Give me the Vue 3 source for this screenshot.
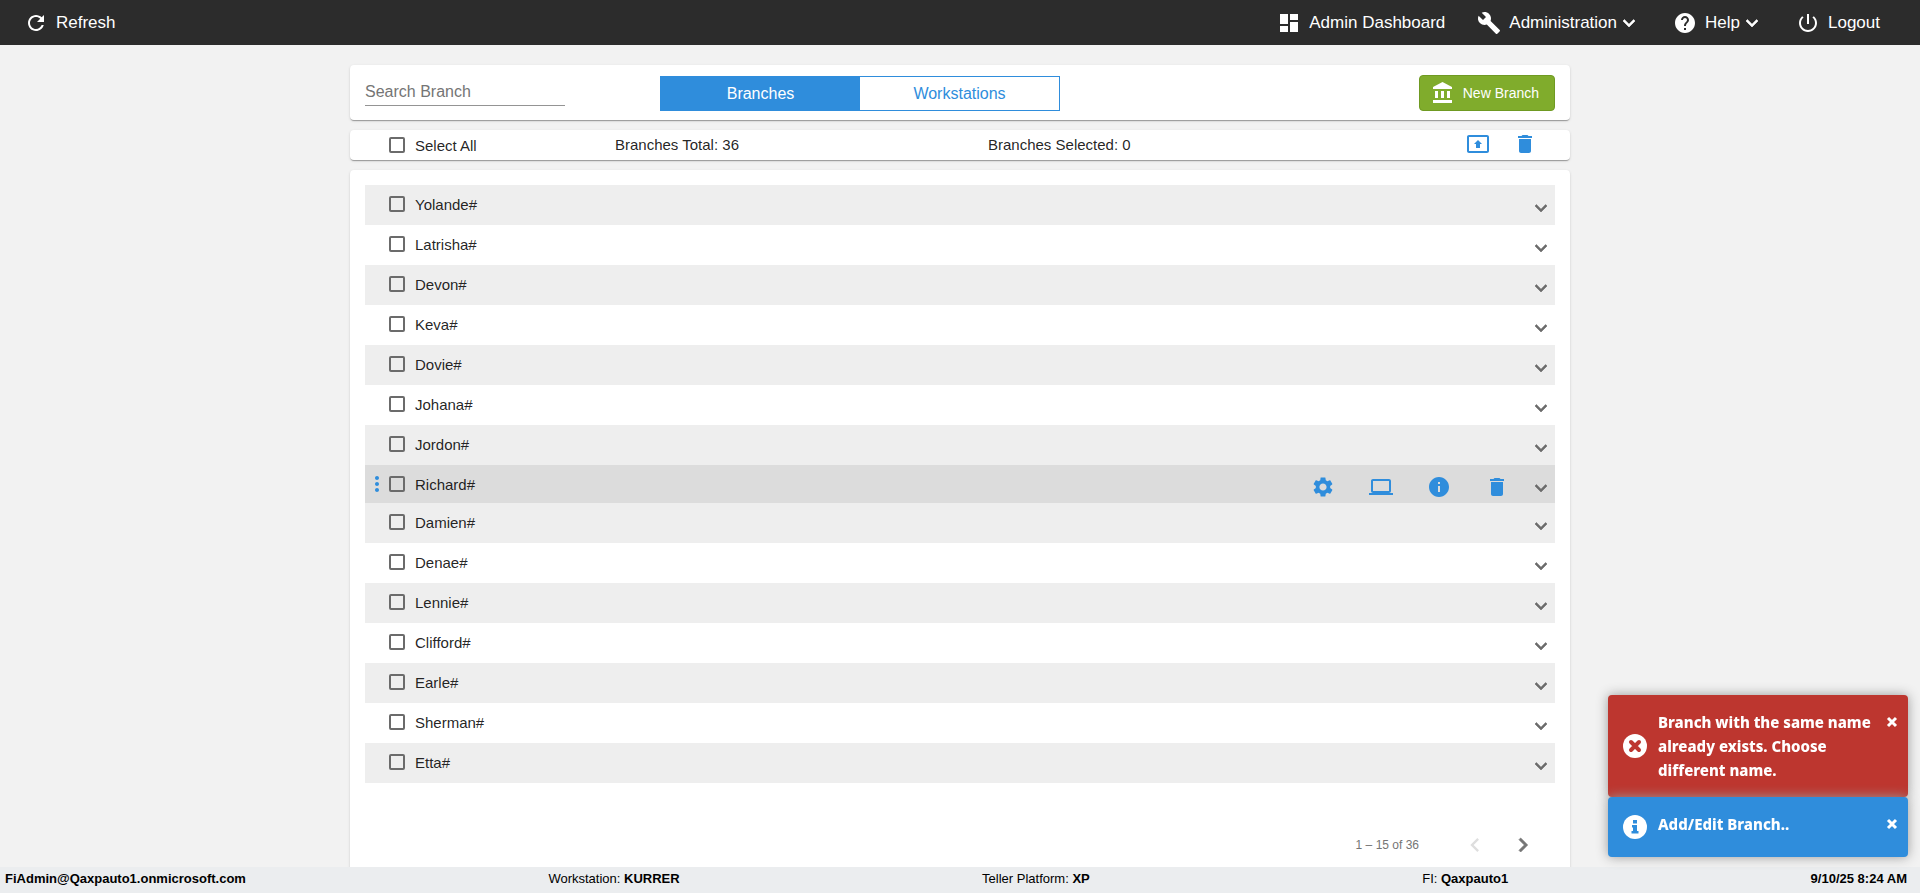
<script setup>
import {ref,computed} from 'vue'

const search=ref('')
const tab=ref('branches')
const active=ref('Richard#')

const branches=ref([
  'Yolande#','Latrisha#','Devon#','Keva#','Dovie#',
  'Johana#','Jordon#','Richard#','Damien#','Denae#',
  'Lennie#','Clifford#','Earle#','Sherman#','Etta#'
].map(name=>({name,selected:false})))

const total=36

const toasts=ref([
  {id:1,type:'error',text:'Branch with the same name already exists. Choose different name.'},
  {id:2,type:'info',text:'Add/Edit Branch..'}
])

const filtered=computed(()=>branches.value.filter(b=>b.name.toLowerCase().includes(search.value.toLowerCase())))

const selectedCount=computed(()=>branches.value.filter(b=>b.selected).length)

const allSelected=computed({
  get:()=>selectedCount.value==branches.value.length,
  set:value=>branches.value.forEach(b=>{b.selected=value})
})

const closeToast=id=>{
  toasts.value=toasts.value.filter(t=>t.id!=id)
}

const icons={
  refresh:'M17.65 6.35C16.2 4.9 14.21 4 12 4c-4.42 0-7.99 3.58-7.99 8s3.57 8 7.99 8c3.73 0 6.84-2.55 7.73-6h-2.08c-.82 2.33-3.04 4-5.65 4-3.31 0-6-2.69-6-6s2.69-6 6-6c1.66 0 3.14.69 4.22 1.78L13 11h7V4l-2.35 2.35z',
  dashboard:'M3 13h8V3H3v10zm0 8h8v-6H3v6zm10 0h8V11h-8v10zm0-18v6h8V3h-8z',
  build:'M22.7 19l-9.1-9.1c.9-2.3.4-5-1.5-6.9-2-2-5-2.4-7.4-1.3L9 6 6 9 1.6 4.7C.4 7.1.9 10.1 2.9 12.1c1.9 1.9 4.6 2.4 6.9 1.5l9.1 9.1c.4.4 1 .4 1.4 0l2.3-2.3c.5-.4.5-1.1.1-1.4z',
  help:'M12 2C6.48 2 2 6.48 2 12s4.48 10 10 10 10-4.48 10-10S17.52 2 12 2zm1 17h-2v-2h2v2zm2.07-7.75l-.9.92C13.45 12.9 13 13.5 13 15h-2v-.5c0-1.1.45-2.1 1.17-2.83l1.24-1.26c.37-.36.59-.86.59-1.41 0-1.1-.9-2-2-2s-2 .9-2 2H8c0-2.21 1.79-4 4-4s4 1.79 4 4c0 .88-.36 1.68-.93 2.25z',
  power:'M13 3h-2v10h2V3zm4.83 2.17l-1.42 1.42C17.99 7.86 19 9.81 19 12c0 3.87-3.13 7-7 7s-7-3.13-7-7c0-2.19 1.01-4.14 2.58-5.42L6.17 5.17C4.23 6.82 3 9.26 3 12c0 4.97 4.03 9 9 9s9-4.03 9-9c0-2.74-1.23-5.18-3.17-6.83z',
  down:'M16.59 8.59L12 13.17 7.41 8.59 6 10l6 6 6-6z',
  left:'M15.41 7.41L14 6l-6 6 6 6 1.41-1.41L10.83 12z',
  right:'M10 6L8.59 7.41 13.17 12l-4.58 4.59L10 18l6-6z',
  bank:'M4 10v7h3v-7H4zm6 0v7h3v-7h-3zM2 22h19v-3H2v3zm14-12v7h3v-7h-3zm-4.5-9L2 6v2h19V6l-9.5-5z',
  present:'M21 3H3c-1.11 0-2 .89-2 2v14c0 1.11.89 2 2 2h18c1.11 0 2-.89 2-2V5c0-1.11-.89-2-2-2zm0 16.02H3V4.98h18v14.04zM10 12H8l4-4 4 4h-2v4h-4v-4z',
  trash:'M6 19c0 1.1.9 2 2 2h8c1.1 0 2-.9 2-2V7H6v12zM19 4h-3.5l-1-1h-5l-1 1H5v2h14V4z',
  more:'M12 8c1.1 0 2-.9 2-2s-.9-2-2-2-2 .9-2 2 .9 2 2 2zm0 2c-1.1 0-2 .9-2 2s.9 2 2 2 2-.9 2-2-.9-2-2-2zm0 6c-1.1 0-2 .9-2 2s.9 2 2 2 2-.9 2-2-.9-2-2-2z',
  gear:'M19.14 12.94c.04-.3.06-.61.06-.94 0-.32-.02-.64-.07-.94l2.03-1.58c.18-.14.23-.41.12-.61l-1.92-3.32c-.12-.22-.37-.29-.59-.22l-2.39.96c-.5-.38-1.03-.7-1.62-.94l-.36-2.54c-.04-.24-.24-.41-.48-.41h-3.84c-.24 0-.43.17-.47.41l-.36 2.54c-.59.24-1.13.57-1.62.94l-2.39-.96c-.22-.08-.47 0-.59.22L2.74 8.87c-.12.21-.08.47.12.61l2.03 1.58c-.05.3-.09.63-.09.94s.02.64.07.94l-2.03 1.58c-.18.14-.23.41-.12.61l1.92 3.32c.12.22.37.29.59.22l2.39-.96c.5.38 1.03.7 1.62.94l.36 2.54c.05.24.24.41.48.41h3.84c.24 0 .44-.17.47-.41l.36-2.54c.59-.24 1.13-.56 1.62-.94l2.39.96c.22.08.47 0 .59-.22l1.92-3.32c.12-.22.07-.47-.12-.61l-2.01-1.58zM12 15.6c-1.98 0-3.6-1.62-3.6-3.6s1.62-3.6 3.6-3.6 3.6 1.62 3.6 3.6-1.62 3.6-3.6 3.6z',
  laptop:'M20 18c1.1 0 1.99-.9 1.99-2L22 6c0-1.1-.9-2-2-2H4c-1.1 0-2 .9-2 2v10c0 1.1.9 2 2 2H0v2h24v-2h-4zM4 6h16v10H4V6z',
  info:'M12 2C6.48 2 2 6.48 2 12s4.48 10 10 10 10-4.48 10-10S17.52 2 12 2zm1 15h-2v-6h2v6zm0-8h-2V7h2v2z'
}

const actions=[
  {icon:'gear',label:'Settings'},
  {icon:'laptop',label:'Workstations'},
  {icon:'info',label:'Details'},
  {icon:'trash',label:'Delete'}
]
</script>

<template>
  <div class="page">
    <header class="topbar">
      <button class="nav-item">
        <svg class="icon" viewBox="0 0 24 24"><path :d="icons.refresh"/></svg>
        <span>Refresh</span>
      </button>
      <nav>
        <a href="#" class="nav-item">
          <svg class="icon" viewBox="0 0 24 24"><path :d="icons.dashboard"/></svg>
          <span>Admin Dashboard</span>
        </a>
        <button class="nav-item">
          <svg class="icon" viewBox="0 0 24 24"><path :d="icons.build"/></svg>
          <span class="with-arrow">Administration<svg class="icon arrow" viewBox="0 0 24 24"><path :d="icons.down"/></svg></span>
        </button>
        <button class="nav-item">
          <svg class="icon" viewBox="0 0 24 24"><path :d="icons.help"/></svg>
          <span class="with-arrow">Help<svg class="icon arrow" viewBox="0 0 24 24"><path :d="icons.down"/></svg></span>
        </button>
        <button class="nav-item">
          <svg class="icon" viewBox="0 0 24 24"><path :d="icons.power"/></svg>
          <span>Logout</span>
        </button>
      </nav>
    </header>

    <main class="content">
      <section class="card toolbar">
        <input class="search" type="text" v-model="search" placeholder="Search Branch" aria-label="Search Branch"/>
        <div class="tabs">
          <button :class="{current:tab=='branches'}" @click="tab='branches'">Branches</button>
          <button :class="{current:tab=='workstations'}" @click="tab='workstations'">Workstations</button>
        </div>
        <button class="new-branch">
          <svg class="icon" viewBox="0 0 24 24"><path :d="icons.bank"/></svg>
          <span>New Branch</span>
        </button>
      </section>

      <section class="card summary">
        <label class="check">
          <input type="checkbox" v-model="allSelected"/>
          <span>Select All</span>
        </label>
        <span class="total">Branches Total: {{total}}</span>
        <span class="selected">Branches Selected: {{selectedCount}}</span>
        <button class="icon-btn" aria-label="Export"><svg class="icon" viewBox="0 0 24 24"><path :d="icons.present"/></svg></button>
        <button class="icon-btn" aria-label="Delete selected"><svg class="icon" viewBox="0 0 24 24"><path :d="icons.trash"/></svg></button>
      </section>

      <section class="card list">
        <ul>
          <li
            v-for="branch in filtered"
            :key="branch.name"
            :class="{active:branch.name==active}"
            @mouseenter="active=branch.name"
          >
            <span class="handle">
              <button v-if="branch.name==active" class="icon-btn" aria-label="More"><svg class="icon" viewBox="0 0 24 24"><path :d="icons.more"/></svg></button>
            </span>
            <label class="check">
              <input type="checkbox" v-model="branch.selected"/>
              <span>{{branch.name}}</span>
            </label>
            <div class="actions" v-if="branch.name==active">
              <button v-for="action in actions" :key="action.icon" class="icon-btn" :aria-label="action.label">
                <svg class="icon" viewBox="0 0 24 24"><path :d="icons[action.icon]"/></svg>
              </button>
            </div>
            <button class="icon-btn expand" aria-label="Expand"><svg class="icon arrow" viewBox="0 0 24 24"><path :d="icons.down"/></svg></button>
          </li>
        </ul>
        <div class="paginator">
          <span>1 – 15 of {{total}}</span>
          <button disabled aria-label="Previous page"><svg viewBox="0 0 24 24"><path :d="icons.left"/></svg></button>
          <button aria-label="Next page"><svg class="arrow" viewBox="0 0 24 24"><path :d="icons.right"/></svg></button>
        </div>
      </section>
    </main>

    <footer class="statusbar">
      <b>FiAdmin@Qaxpauto1.onmicrosoft.com</b>
      <span>Workstation: <b>KURRER</b></span>
      <span>Teller Platform: <b>XP</b></span>
      <span class="fi">FI: <b>Qaxpauto1</b></span>
      <b>9/10/25 8:24 AM</b>
    </footer>

    <div class="toasts">
      <div v-for="toast in toasts" :key="toast.id" class="toast" :class="toast.type" role="alert">
        <svg class="toast-icon" viewBox="0 0 24 24">
          <circle cx="12" cy="12" r="12" fill="#fff"/>
          <path v-if="toast.type=='error'" d="M8 8l8 8M16 8l-8 8" stroke="#bd362f" stroke-width="4" stroke-linecap="round"/>
          <path v-else d="M10 5h4v3.500h-4zM9 10h5v6h1.500v2.500h-7V16H10v-3.500H9z" fill="#2f8ddc"/>
        </svg>
        <p>{{toast.text}}</p>
        <button aria-label="Close" @click="closeToast(toast.id)">
          <svg viewBox="0 0 12 12"><path d="M2 2l8 8M10 2l-8 8" stroke="#fff" stroke-width="3"/></svg>
        </button>
      </div>
    </div>
  </div>
</template>

<style>
  body{
    margin: 0;
    background-color: #f2f2f2;
  }
</style>

<style scoped>
  *{
    box-sizing: border-box;
  }

  .page{
    display: flex;
    flex-direction: column;
    height: 100vh;
    overflow: hidden;
    font-family: 'Liberation Sans',Arial,sans-serif;
    font-size: 15px;
    color: rgba(0,0,0,.87);
  }

  button{
    appearance: none;
    border: none;
    padding: 0;
    background: none;
    font-family: inherit;
    color: inherit;
    cursor: pointer;
  }

  .icon{
    display: block;
    flex: none;
    width: 24px;
    height: 24px;
    fill: currentColor;
  }
  .arrow{
    stroke: currentColor;
    stroke-width: 0.6;
  }

  .topbar{
    display: flex;
    flex: none;
    justify-content: space-between;
    align-items: center;
    height: 45px;
    padding: 0 24px 0 8px;
    background-color: #2c2c2c;
    color: #fff;
  }
  .topbar nav{
    display: flex;
  }
  .nav-item{
    display: flex;
    align-items: center;
    gap: 8px;
    padding: 0 16px;
    font-size: 17px;
    color: #fff;
    text-decoration: none;
  }
  .with-arrow{
    display: flex;
    align-items: center;
  }

  .content{
    display: flex;
    flex: 1;
    flex-direction: column;
    gap: 10px;
    min-height: 0;
    width: 100%;
    max-width: 1220px;
    margin: 0 auto;
    padding-top: 20px;
  }

  .card{
    flex: none;
    background-color: #fff;
    border-radius: 4px;
    box-shadow: 0 2px 1px -1px rgba(0,0,0,.2),0 1px 1px 0 rgba(0,0,0,.14),0 1px 3px 0 rgba(0,0,0,.12);
  }

  .toolbar{
    display: flex;
    align-items: flex-end;
    height: 55px;
    padding: 0 15px 9px;
  }
  .search{
    width: 200px;
    height: 30px;
    margin: 0 95px 5px 0;
    padding: 3px 0 0;
    border: none;
    border-bottom: 1px solid #949494;
    outline: none;
    font-family: inherit;
    font-size: 16px;
  }
  .search::placeholder{
    color: #757575;
    opacity: 1;
  }
  .tabs{
    display: flex;
    width: 400px;
    height: 35px;
    border: 1px solid #2f8ddc;
  }
  .tabs button{
    flex: 1;
    font-size: 16px;
    color: #2f8ddc;
  }
  .tabs .current{
    background-color: #2f8ddc;
    color: #fff;
  }
  .new-branch{
    display: flex;
    align-items: center;
    gap: 8px;
    height: 36px;
    margin-left: auto;
    padding: 0 15px 0 11px;
    background-color: #80ac2c;
    border: 1px solid #6f9a22;
    border-radius: 4px;
    font-size: 14px;
    color: #fff;
  }

  .check{
    display: flex;
    align-items: center;
    gap: 10px;
    cursor: pointer;
  }
  .check input{
    appearance: none;
    width: 16px;
    height: 16px;
    margin: 0;
    border: 2px solid #6b6b6b;
    border-radius: 2px;
  }
  .check input:checked{
    background-color: #2f8ddc;
    border-color: #2f8ddc;
  }

  .icon-btn{
    color: #2f8ddc;
  }

  .summary{
    display: flex;
    align-items: center;
    height: 30px;
    padding: 0 33px 2px 39px;
  }
  .summary .check{
    width: 226px;
    padding-top: 2px;
  }
  .summary .total{
    width: 373px;
  }
  .summary .selected{
    flex: 1;
  }
  .summary .icon-btn + .icon-btn{
    margin-left: 23px;
  }

  .list{
    padding: 15px;
  }
  .list ul{
    margin: 0;
    padding: 0;
    list-style: none;
  }
  .list li{
    display: flex;
    align-items: center;
    height: 40px;
    padding-right: 2px;
  }
  .list li:nth-child(odd){
    background-color: #eee;
  }
  .list li.active{
    height: 38px;
    padding-top: 2px;
    background-color: #dcdcdc;
  }
  .handle{
    width: 24px;
  }
  .list .check{
    flex: 1;
    padding-bottom: 2px;
  }
  .actions{
    display: flex;
    gap: 34px;
    margin-right: 20px;
    padding-top: 4px;
  }
  .list .expand{
    padding-top: 6px;
    color: #6b6b6b;
  }

  .paginator{
    display: flex;
    justify-content: flex-end;
    align-items: center;
    height: 56px;
    margin-top: 34px;
    padding-right: 8px;
    font-size: 12px;
    color: #757575;
  }
  .paginator span{
    margin-right: 32px;
  }
  .paginator button{
    display: flex;
    justify-content: center;
    width: 48px;
  }
  .paginator button:disabled{
    color: #dedede;
  }
  .paginator svg{
    width: 28px;
    height: 28px;
    fill: currentColor;
  }

  .statusbar{
    display: flex;
    flex: none;
    justify-content: space-between;
    align-items: center;
    position: relative;
    height: 26px;
    padding: 0 13px 3px 5px;
    background-color: #ebedef;
    font-size: 13px;
    color: #000;
  }
  .statusbar .fi{
    margin-left: 30px;
  }

  .toasts{
    position: fixed;
    right: 12px;
    bottom: 36px;
    width: 300px;
  }
  .toast{
    display: flex;
    align-items: center;
    min-height: 60px;
    padding: 15px 10px 15px 15px;
    border-radius: 4px;
    box-shadow: 0 0 12px #999;
    font-family: 'Noto Sans','Open Sans',sans-serif;
    font-size: 15px;
    font-weight: 800;
    line-height: 24px;
    color: #fff;
  }
  .toast.error{
    background-color: #bd362f;
  }
  .toast.info{
    background-color: #2f8ddc;
  }
  .toast-icon{
    flex: none;
    width: 24px;
    height: 24px;
    fill: none;
  }
  .toast p{
    flex: 1;
    align-self: flex-start;
    margin: 0 0 0 11px;
  }
  .toast button{
    align-self: flex-start;
    padding: 6px 0;
  }
  .toast button svg{
    display: block;
    width: 12px;
    height: 12px;
  }
</style>
